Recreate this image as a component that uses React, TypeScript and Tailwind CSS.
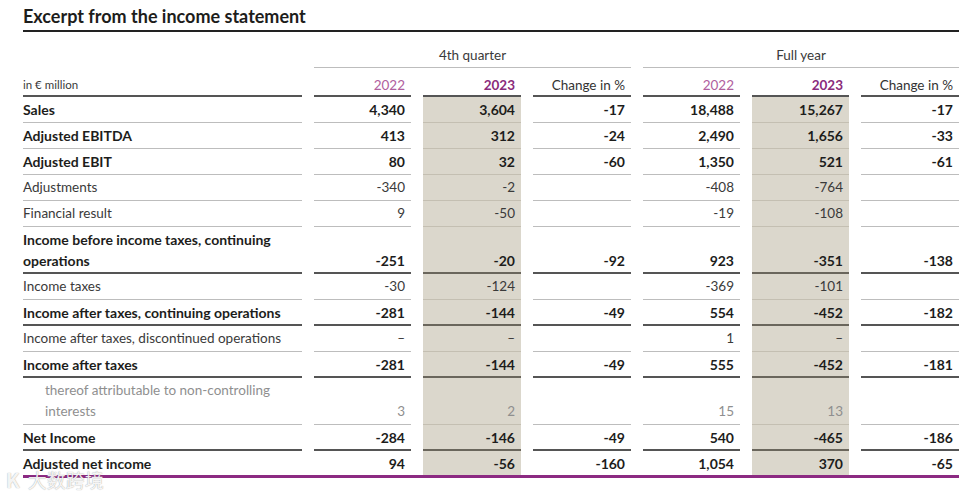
import React from "react";

type Line = "light" | "dark" | "none";
type Row = {
  label: React.ReactNode;
  vals: string[];
  bold?: boolean;
  muted?: boolean;
  tall?: boolean;
  line: Line;
};

const rows: Row[] = [
  { label: "Sales", vals: ["4,340", "3,604", "-17", "18,488", "15,267", "-17"], bold: true, line: "light" },
  { label: "Adjusted EBITDA", vals: ["413", "312", "-24", "2,490", "1,656", "-33"], bold: true, line: "light" },
  { label: "Adjusted EBIT", vals: ["80", "32", "-60", "1,350", "521", "-61"], bold: true, line: "light" },
  { label: "Adjustments", vals: ["-340", "-2", "", "-408", "-764", ""], line: "light" },
  { label: "Financial result", vals: ["9", "-50", "", "-19", "-108", ""], line: "light" },
  {
    label: (
      <>
        Income before income taxes, continuing
        <br />
        operations
      </>
    ),
    vals: ["-251", "-20", "-92", "923", "-351", "-138"],
    bold: true,
    tall: true,
    line: "dark",
  },
  { label: "Income taxes", vals: ["-30", "-124", "", "-369", "-101", ""], line: "light" },
  { label: "Income after taxes, continuing operations", vals: ["-281", "-144", "-49", "554", "-452", "-182"], bold: true, line: "dark" },
  { label: "Income after taxes, discontinued operations", vals: ["–", "–", "", "1", "–", ""], line: "light" },
  { label: "Income after taxes", vals: ["-281", "-144", "-49", "555", "-452", "-181"], bold: true, line: "dark" },
  {
    label: (
      <>
        thereof attributable to non-controlling
        <br />
        interests
      </>
    ),
    vals: ["3", "2", "", "15", "13", ""],
    muted: true,
    tall: true,
    line: "light",
  },
  { label: "Net Income", vals: ["-284", "-146", "-49", "540", "-465", "-186"], bold: true, line: "dark" },
  { label: "Adjusted net income", vals: ["94", "-56", "-160", "1,054", "370", "-65"], bold: true, line: "none" },
];

function lineClass(line: Line, shaded: boolean) {
  if (line === "none") return "pb-[1px]";
  if (line === "dark")
    return shaded ? "pb-[1px] border-b-2 border-[#6a665c]" : "pb-[1px] border-b-2 border-[#555555]";
  return shaded ? "pb-[2px] border-b border-[#c4bfb2]" : "pb-[2px] border-b border-[#bdbdbd]";
}

export default function App() {
  const grid = "grid grid-cols-[279px_97px_98px_98px_97px_97px_98px] gap-x-[12px]";
  return (
    <div className="relative w-[973px] h-[493px] bg-white overflow-hidden font-[Lato,sans-serif] text-[#3a3a3a]">
      <div className="pl-[23px]">
        <div className="w-[936px] pt-[6px] pb-[4px] border-b-2 border-[#222222] text-[18px] leading-[20px] font-bold text-[#1d1d1b]">
          Excerpt from the income statement
        </div>

        <div className={grid + " text-[13.5px]"}>
          {/* group header */}
          <div />
          <div className="col-span-3 text-center pt-[13px] pb-[2px] leading-[20px] border-b border-[#bdbdbd]">
            4th quarter
          </div>
          <div className="col-span-3 text-center pt-[13px] pb-[2px] leading-[20px] border-b border-[#bdbdbd]">
            Full year
          </div>

          {/* column header */}
          <div className="pt-[7px] leading-[20px] text-[11.5px] border-b-2 border-[#555555] flex items-end">
            in € million
          </div>
          {["2022", "2023", "Change in %", "2022", "2023", "Change in %"].map((h, i) => {
            const cls =
              h === "2022"
                ? "text-[#b0609e]"
                : h === "2023"
                ? "text-[#8a2c7c] font-bold"
                : "text-[#333333]";
            return (
              <div
                key={i}
                className={"pt-[7px] leading-[20px] pr-[6px] text-right border-b-2 border-[#555555] " + cls}
              >
                {h}
              </div>
            );
          })}

          {rows.map((r, ri) => {
            const weight = r.bold
              ? "font-bold text-[14px] text-[#1d1d1b]"
              : r.muted
              ? "text-[#8f8f8f]"
              : "text-[#3a3a3a]";
            return (
              <React.Fragment key={ri}>
                <div
                  className={
                    "pt-[2px] leading-[21px] " +
                    (r.muted ? "pl-[22px] " : "") +
                    weight +
                    " " +
                    lineClass(r.line, false)
                  }
                >
                  {r.label}
                </div>
                {r.vals.map((v, ci) => {
                  const shaded = ci === 1 || ci === 4;
                  return (
                    <div
                      key={ci}
                      className={
                        "flex items-end justify-end pt-[2px] pr-[6px] leading-[21px] " +
                        weight +
                        " " +
                        (shaded ? "bg-[#dbd7cc] " : "") +
                        lineClass(r.line, shaded)
                      }
                    >
                      {v}
                    </div>
                  );
                })}
              </React.Fragment>
            );
          })}
        </div>
        <div className="w-[936px] h-[3px] bg-[#8c2a82]" />
      </div>

      <div className="absolute left-[6px] top-[470px] flex items-center gap-[8px] text-white/90 leading-[20px] font-['Noto_Sans_CJK_SC',sans-serif] [text-shadow:0_0_1px_rgba(0,0,0,0.45)]">
        <span className="text-[20px] font-bold">K</span>
        <span className="text-[19px]">大数跨境</span>
      </div>
    </div>
  );
}
